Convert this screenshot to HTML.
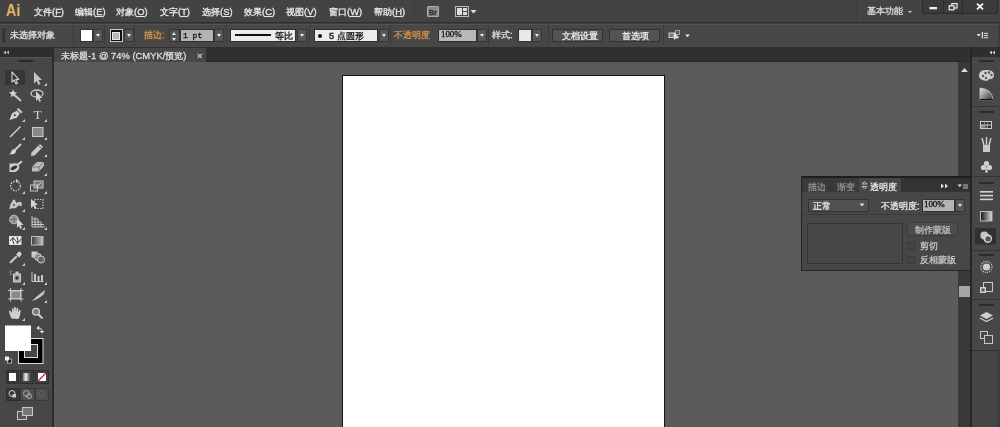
<!DOCTYPE html>
<html><head><meta charset="utf-8">
<style>
*{box-sizing:border-box;margin:0;padding:0}
html,body{width:1000px;height:427px;overflow:hidden;background:#5b5b5b;font-family:"Liberation Sans",sans-serif;font-size:9.4px;color:#e8e8e8}
.a{position:absolute}
.t{position:absolute;white-space:nowrap;line-height:1;will-change:transform;-webkit-text-stroke:0.3px currentColor}
/* menubar */
#menubar{left:0;top:0;width:1000px;height:23px;background:#434343;border-bottom:1px solid #2f2f2f}
#ctrl{left:0;top:23px;width:1000px;height:24px;background:#474747;border-top:1px solid #3d3d3d;box-shadow:inset 0 1px 0 #525252}
#hdrL{left:0;top:47px;width:53px;height:10px;background:#2e2e2e}
#tool{left:0;top:57px;width:52px;height:370px;background:#474747;border-top:1px solid #555}
#tabbar{left:53px;top:47px;width:919px;height:15px;background:#303030;border-bottom:1px solid #282828}
#tab{left:54px;top:48px;width:152px;height:14px;background:#474747}
#canvas{left:54px;top:62px;width:904px;height:365px;background:#5b5b5b}
#board{left:342px;top:75px;width:323px;height:360px;background:#fff;border:1px solid #151515}
#vscroll{left:958px;top:62px;width:12px;height:365px;background:#393939}
#gap{left:970px;top:47px;width:2px;height:380px;background:#262626}
#hdrR{left:972px;top:47px;width:28px;height:10px;background:#2e2e2e}
#dock{left:972px;top:57px;width:28px;height:370px;background:#474747}
.dd{position:absolute;background:#565656;border:1px solid #363636}
.dd:after{content:"";position:absolute;left:50%;top:50%;margin-left:-2.5px;margin-top:-1.5px;border-left:2.5px solid transparent;border-right:2.5px solid transparent;border-top:3px solid #ececec}
.orange{color:#d39450}
</style></head><body>
<div id="menubar" class="a"></div>
<div id="ctrl" class="a"></div>
<div id="hdrL" class="a"></div>
<div id="tool" class="a"></div>
<div id="tabbar" class="a"></div>
<div id="tab" class="a"></div>
<div id="canvas" class="a"></div>
<div id="board" class="a"></div>
<div class="a" style="left:52px;top:47px;width:2px;height:380px;background:#2b2b2b"></div>
<div id="vscroll" class="a"></div>
<div id="gap" class="a"></div>
<div id="hdrR" class="a"></div>
<div id="dock" class="a"></div>

<!-- menubar text -->
<div class="t" style="left:5.8px;top:2px;font-size:16.5px;font-weight:bold;color:#e8c070;transform:scaleX(0.86);transform-origin:0 0;-webkit-text-stroke:0.3px #b08030">Ai</div>
<div class="t" style="left:34px;top:6.8px">文件(<u>F</u>)</div>
<div class="t" style="left:75px;top:6.8px">编辑(<u>E</u>)</div>
<div class="t" style="left:116px;top:6.8px">对象(<u>O</u>)</div>
<div class="t" style="left:160px;top:6.8px">文字(<u>T</u>)</div>
<div class="t" style="left:202px;top:6.8px">选择(<u>S</u>)</div>
<div class="t" style="left:244px;top:6.8px">效果(<u>C</u>)</div>
<div class="t" style="left:286px;top:6.8px">视图(<u>V</u>)</div>
<div class="t" style="left:329px;top:6.8px">窗口(<u>W</u>)</div>
<div class="t" style="left:374px;top:6.8px">帮助(<u>H</u>)</div>
<div class="t" style="left:867px;top:5.8px;color:#dcdcdc">基本功能</div>


<!-- control bar -->
<div class="a" style="left:73px;top:25px;width:1px;height:20px;background:#3a3a3a"></div><div class="a" style="left:104px;top:25px;width:1px;height:20px;background:#3a3a3a"></div><div class="a" style="left:134px;top:25px;width:1px;height:20px;background:#3a3a3a"></div><div class="a" style="left:226px;top:25px;width:1px;height:20px;background:#3a3a3a"></div><div class="a" style="left:309px;top:25px;width:1px;height:20px;background:#3a3a3a"></div><div class="a" style="left:390px;top:25px;width:1px;height:20px;background:#3a3a3a"></div><div class="a" style="left:488px;top:25px;width:1px;height:20px;background:#3a3a3a"></div><div class="a" style="left:663px;top:25px;width:1px;height:20px;background:#3a3a3a"></div>
<div class="a" style="left:2px;top:28px;width:3px;height:15px;background:#333;border-left:1px solid #3a3a3a"></div>
<div class="t" style="left:10px;top:30px;color:#e0e0e0">未选择对象</div>
<div class="a" style="left:80px;top:29px;width:13px;height:13px;background:#fff;border:1px solid #333"></div>
<div class="dd" style="left:93px;top:29px;width:10px;height:13px"></div>
<div class="a" style="left:110px;top:29px;width:13px;height:13px;background:#111;border:1px solid #ccc"></div>
<div class="a" style="left:112px;top:32px;width:8px;height:8px;border:1px solid #e8e8e8;background:#b8b8b8"></div>
<div class="dd" style="left:124px;top:29px;width:10px;height:13px"></div>
<div class="t orange" style="left:144px;top:30px">描边:</div>
<div class="a" style="left:169px;top:29px;width:11px;height:13px;background:#525252;border:1px solid #333"></div>
<div class="a" style="left:171.5px;top:31.5px;width:0;height:0;border-left:2.5px solid transparent;border-right:2.5px solid transparent;border-bottom:3px solid #ddd"></div>
<div class="a" style="left:171.5px;top:37.5px;width:0;height:0;border-left:2.5px solid transparent;border-right:2.5px solid transparent;border-top:3px solid #ddd"></div>
<div class="a" style="left:180px;top:29px;width:34px;height:13px;background:#b4b4b4;border:1px solid #2e2e2e"></div>
<div class="t" style="left:183px;top:31.5px;color:#111;font-family:'Liberation Mono',monospace;font-size:8px">1 pt</div>
<div class="dd" style="left:214px;top:29px;width:10px;height:13px"></div>
<div class="a" style="left:230px;top:29px;width:66px;height:13px;background:#ececec;border:1px solid #2e2e2e"></div>
<div class="a" style="left:235px;top:34px;width:36px;height:2px;background:#111"></div>
<div class="t" style="left:275px;top:31px;color:#111">等比</div>
<div class="dd" style="left:297px;top:29px;width:10px;height:13px"></div>
<div class="a" style="left:314px;top:29px;width:64px;height:13px;background:#ececec;border:1px solid #2e2e2e"></div>
<div class="a" style="left:318px;top:34px;width:4px;height:4px;border-radius:50%;background:#111"></div>
<div class="t" style="left:329px;top:31px;color:#111">5 点圆形</div>
<div class="dd" style="left:379px;top:29px;width:10px;height:13px"></div>
<div class="t orange" style="left:394px;top:30px">不透明度</div>
<div class="a" style="left:438px;top:29px;width:39px;height:13px;background:#b9b9b9;border:1px solid #2e2e2e"></div>
<div class="t" style="left:440.5px;top:30.3px;color:#111;font-family:'Liberation Serif',serif;font-size:9px;letter-spacing:-0.1px">100%</div>
<div class="dd" style="left:477px;top:29px;width:10px;height:13px"></div>
<div class="t" style="left:492px;top:30px;color:#e0e0e0">样式:</div>
<div class="a" style="left:518px;top:29px;width:14px;height:13px;background:#e8e8e8;border:1px solid #333"></div>
<div class="dd" style="left:532px;top:29px;width:10px;height:13px"></div>
<div class="a" style="left:548px;top:23px;width:1px;height:23px;background:#3a3a3a"></div>
<div class="a" style="left:552px;top:29px;width:51px;height:13px;background:#535353;border:1px solid #323232"></div>
<div class="t" style="left:562px;top:31px;color:#e8e8e8">文档设置</div>
<div class="a" style="left:609px;top:29px;width:51px;height:13px;background:#535353;border:1px solid #323232"></div>
<div class="t" style="left:622px;top:31px;color:#e8e8e8">首选项</div>
<svg class="a" style="left:975px;top:30px" width="16" height="10" viewBox="975 30 16 10">
<path d="M976.5 34 L980.8 34 L978.65 36.5Z" fill="#e0e0e0"/>
<rect x="981.7" y="32" width="1.3" height="6.5" fill="#d8d8d8"/>
<rect x="983.8" y="32.8" width="4.4" height="1.1" fill="#d8d8d8"/>
<rect x="983.8" y="35" width="4.4" height="1.1" fill="#d8d8d8"/>
<rect x="983.8" y="37.2" width="4.4" height="1.1" fill="#d8d8d8"/>
</svg>
<div class="a" style="left:998px;top:23px;width:2px;height:24px;background:#3c3c3c"></div>


<!-- toolbar -->
<svg class="a" style="left:0;top:0" width="56" height="427" viewBox="0 0 56 427">
<defs>
<linearGradient id="g1" x1="0" x2="1" y1="0" y2="0"><stop offset="0" stop-color="#777"/><stop offset="0.35" stop-color="#eee"/><stop offset="1" stop-color="#2a2a2a"/></linearGradient>
<linearGradient id="g2" x1="0" x2="1" y1="0" y2="0"><stop offset="0" stop-color="#3a3a3a"/><stop offset="1" stop-color="#c4c4c4"/></linearGradient>
</defs>
<!-- header chevrons -->
<path d="M6 50.5 L3.5 52.5 L6 54.5Z M9 50.5 L6.5 52.5 L9 54.5Z" fill="#bbb"/>
<rect x="19" y="60" width="14" height="2" fill="#2a2a2a"/>
<!-- separators -->
<g fill="#444">
<rect x="3" y="104" width="46" height="1"/><rect x="3" y="177" width="46" height="1"/>
<rect x="3" y="231" width="46" height="1"/><rect x="3" y="286" width="46" height="1"/>
<rect x="3" y="322" width="46" height="1"/><rect x="3" y="367" width="46" height="1"/>
<rect x="3" y="403" width="46" height="1"/>
</g>
<!-- corner triangles -->
<g fill="#ccc">
<path d="M47 83 L47 86 L44 86Z"/>
<path d="M25 119 L25 122 L22 122Z"/><path d="M47 119 L47 122 L44 122Z"/>
<path d="M25 137 L25 140 L22 140Z"/><path d="M47 137 L47 140 L44 140Z"/>
<path d="M47 154 L47 157 L44 157Z"/><path d="M47 173 L47 176 L44 176Z"/>
<path d="M25 191 L25 194 L22 194Z"/><path d="M47 191 L47 194 L44 194Z"/>
<path d="M25 209 L25 212 L22 212Z"/>
<path d="M25 227 L25 230 L22 230Z"/><path d="M47 227 L47 230 L44 230Z"/>
<path d="M25 263 L25 266 L22 266Z"/>
<path d="M25 282 L25 285 L22 285Z"/><path d="M47 282 L47 285 L44 285Z"/>
<path d="M47 300 L47 303 L44 303Z"/>
<path d="M25 318 L25 321 L22 321Z"/>
</g>
<!-- selection selected -->
<rect x="5" y="70" width="20" height="15" fill="#363636"/>
<path d="M12 71.8 L12 82.2 L14.2 80 L16 84 L17.6 83.3 L15.8 79.4 L18.8 79.4Z" fill="#333" stroke="#d4d4d4" stroke-width="1.1" stroke-linejoin="round"/>
<path d="M34 72 L34 83.5 L36.5 81 L38.5 85 L40.5 84 L38.5 80 L42 80Z" fill="#c4c4c4"/>
<!-- magic wand -->
<path d="M13 89 L14 92 L17 92.5 L14.5 94.5 L15.5 97.5 L13 95.5 L10.5 97.5 L11.5 94.5 L9 92.5 L12 92Z" fill="#d6d6d6"/>
<path d="M14.5 95 L21 101" stroke="#c8c8c8" stroke-width="2"/>
<!-- lasso -->
<ellipse cx="37" cy="93.5" rx="6" ry="3.5" fill="none" stroke="#c8c8c8" stroke-width="1.3"/>
<path d="M36 91 L36 101 L38 99 L39.5 102 L41 101 L39.5 98 L42.5 98Z" fill="#d0d0d0"/>
<!-- pen -->
<path d="M17.5 108.8 L21.8 112.8" stroke="#d0d0d0" stroke-width="2.2"/>
<path d="M17 110.8 L19.8 113.6 L16.8 117.8 L9.5 120 L12 113.2 Z" fill="#d2d2d2"/>
<circle cx="14.8" cy="115.3" r="1" fill="#3a3a3a"/>
<!-- type -->
<text x="37.5" y="119" font-family="Liberation Serif" font-size="13.5" fill="#d0d0d0" text-anchor="middle">T</text>
<!-- line -->
<path d="M10 137 L20.5 126.5" stroke="#d0d0d0" stroke-width="1.5"/>
<!-- rect -->
<rect x="32.5" y="127.5" width="10.5" height="9" fill="#8a8a8a" stroke="#c8c8c8" stroke-width="1"/>
<!-- brush -->
<path d="M21 144 L15 150" stroke="#d0d0d0" stroke-width="1.8"/>
<path d="M15.5 149 Q17 152 14 154 L9 154.5 Q11 153 11.5 151 Q12.5 148.5 15.5 149Z" fill="#d6d6d6"/>
<!-- pencil -->
<path d="M40 144 L43 147 L34.5 155.5 L31 156 L31.5 152.5Z" fill="#c8c8c8"/>
<path d="M38.5 145.5 L41.5 148.5" stroke="#444" stroke-width="0.8"/>
<!-- blob brush -->
<path d="M9.5 163.5 L14 163.5 Q16.5 162.8 18.5 164.5 L19.5 167.5 Q18.5 171 15.5 172 L9.5 172 Z" fill="#cdcdcd"/>
<ellipse cx="14" cy="167.8" rx="3.6" ry="1.7" transform="rotate(-28 14 167.8)" fill="#333"/>
<path d="M17 165.2 L22 161.2" stroke="#d6d6d6" stroke-width="1.8"/>
<!-- eraser -->
<path d="M32 167 L37 162 L44 162 L44 166 L39 171.5 L32 171.5Z" fill="#bdbdbd"/>
<path d="M32 167 L39 167 L44 162 M39 167 L39 171.5" stroke="#666" stroke-width="0.8" fill="none"/>
<!-- rotate -->
<circle cx="15.5" cy="186" r="4.8" fill="none" stroke="#c8c8c8" stroke-width="1.3" stroke-dasharray="1.6 1.2"/>
<path d="M16 179 L19 181 L16 183Z" fill="#d0d0d0"/>
<!-- scale -->
<rect x="34" y="181" width="9" height="7" fill="#777" stroke="#c8c8c8" stroke-width="1"/>
<rect x="30.5" y="185" width="7" height="6" fill="none" stroke="#c8c8c8" stroke-width="1"/>
<path d="M36 187 L41 183" stroke="#ddd" stroke-width="1"/>
<!-- warp -->
<path d="M9.5 209.5 Q9.5 204 12 202 Q13 198.5 15 200 Q15.5 202 17 203 Q19 201 21.5 202.5 Q22.5 205 21 206.5 Q19.5 205 18 206 Q15.5 209.5 12.5 208 Q11 208.5 9.5 209.5Z" fill="#c8c8c8"/>
<circle cx="14" cy="205" r="1.1" fill="#555"/>
<!-- free transform -->
<rect x="34.5" y="199.5" width="8.5" height="9" fill="none" stroke="#c8c8c8" stroke-width="1.2" stroke-dasharray="1.5 1.2"/>
<path d="M31 199 L31 208 L33.5 206 L35 209 L36.5 208 L35 205 L38 205Z" fill="#d6d6d6"/>
<!-- shape builder -->
<circle cx="14" cy="219.5" r="4.3" fill="#9a9a9a" stroke="#c8c8c8" stroke-width="1"/>
<path d="M10 219.5 L18 219.5 M14 215.5 L14 223.5" stroke="#666" stroke-width="0.8"/>
<path d="M17 218 L17 228 L19 226 L20.5 229 L22 228 L20.5 225 L23.5 225Z" fill="#d6d6d6"/>
<!-- perspective grid -->
<path d="M32 216 L32 227 L45 227 M35 217 L35 227 M38 219 L38 227 M41 222 L41 227 M32 219 L38 219 M32 222 L41 222 M32 224.5 L44 224.5" fill="none" stroke="#c8c8c8" stroke-width="1"/>
<!-- mesh -->
<rect x="9.5" y="236.5" width="11.5" height="8" fill="#eee" stroke="#ddd"/>
<path d="M10 241 Q13 236 15.5 240.5 Q18 245 21 239 M13 237 Q12 241 14 244 M17 237 Q19 241 17 244" fill="none" stroke="#333" stroke-width="1"/>
<!-- gradient -->
<rect x="31.5" y="236.5" width="11.5" height="8.5" fill="url(#g2)" stroke="#bbb" stroke-width="1"/>
<!-- eyedropper -->
<path d="M20.5 252 Q22.5 254 20.5 256 L19 257.5 L16 254.5 L17.5 253 Q18.5 250.5 20.5 252Z" fill="#d0d0d0"/>
<path d="M16.5 256 L11 261.5 L10 263 L11.5 262 L17 256.5" fill="none" stroke="#c8c8c8" stroke-width="1.4"/>
<!-- blend -->
<rect x="31.5" y="251.5" width="6" height="6" fill="#ccc"/>
<circle cx="38" cy="257" r="3.5" fill="#888" stroke="#ccc" stroke-width="1"/>
<circle cx="41" cy="259.5" r="3.5" fill="#666" stroke="#ccc" stroke-width="1"/>
<!-- symbol sprayer -->
<rect x="13.5" y="274" width="7" height="8" fill="#aaa" stroke="#ccc" stroke-width="1"/>
<circle cx="17" cy="278" r="1.8" fill="#333"/>
<rect x="15.5" y="271.5" width="3" height="2.5" fill="#ccc"/>
<path d="M9.5 272 L11 272 M10 274 L11.5 274.5 M11 270.5 L12 271.5" stroke="#bbb" stroke-width="1"/>
<!-- graph -->
<path d="M32 272 L32 281.5 L43.5 281.5" fill="none" stroke="#c8c8c8" stroke-width="1"/>
<rect x="34" y="274" width="2" height="7" fill="#c8c8c8"/>
<rect x="37.5" y="276" width="2" height="5" fill="#c8c8c8"/>
<rect x="41" y="275" width="2" height="6" fill="#c8c8c8"/>
<!-- artboard -->
<rect x="11" y="291" width="9.5" height="7.5" fill="#8a8a8a" stroke="#c8c8c8" stroke-width="1"/>
<path d="M8 290.5 L23.5 290.5 M8 299 L23.5 299 M10.5 288 L10.5 301.5 M21 288 L21 301.5" stroke="#c8c8c8" stroke-width="1"/>
<!-- slice -->
<path d="M45 290 L36 297 L32 301 Q38 299.5 44 294 Z" fill="#c8c8c8"/>
<!-- hand -->
<path d="M11.5 318.5 Q9 313 9 311 Q9.5 310 10.5 311 L12 313 L12 308.5 Q12.8 307.5 13.5 308.5 L13.8 312 L14.2 307.3 Q15 306.5 15.8 307.3 L16 312 L16.6 308 Q17.4 307.3 18.2 308 L18.2 312.5 L19.2 310 Q20 309.5 20.7 310.2 L20 315.5 L18.5 319Z" fill="#d0d0d0"/>
<!-- zoom -->
<circle cx="36" cy="311.8" r="3.4" fill="#7a7a7a" stroke="#cfcfcf" stroke-width="1.3"/>
<path d="M38.5 314.5 L42.5 318.5" stroke="#d0d0d0" stroke-width="2"/>
<!-- fill / stroke -->
<rect x="18.5" y="338.5" width="24.5" height="25" fill="#000" stroke="#ddd" stroke-width="1"/>
<rect x="24.5" y="344.5" width="13" height="13" fill="#454545" stroke="#e0e0e0" stroke-width="1"/>
<rect x="5" y="325.5" width="26" height="25.5" fill="#fff"/>
<path d="M38.5 328 Q42 328 42 331.5" fill="none" stroke="#bbb" stroke-width="1.1"/>
<path d="M36.3 328 L39.2 325.8 L39.2 330.2Z M39.8 331 L44.2 331 L42 333.6Z" fill="#e0e0e0"/>
<rect x="7.5" y="359" width="4" height="4" fill="#111" stroke="#ccc" stroke-width="0.8"/>
<rect x="5" y="356.5" width="4" height="4" fill="#eee"/>
<!-- color buttons -->
<rect x="6.5" y="370.5" width="12" height="13" fill="#383838" stroke="#2e2e2e"/>
<rect x="9" y="373" width="7" height="8" fill="#fff"/>
<rect x="20.5" y="370.5" width="13" height="13" fill="#3f3f3f" stroke="#2e2e2e"/>
<rect x="23" y="373" width="8" height="8" fill="url(#g1)"/>
<rect x="35.5" y="370.5" width="13" height="13" fill="#3f3f3f" stroke="#2e2e2e"/>
<rect x="38" y="373" width="8" height="8" fill="#fff"/>
<path d="M38 381 L46 373" stroke="#cc2233" stroke-width="1.3"/>
<!-- draw modes -->
<rect x="6.5" y="388.5" width="13" height="12" fill="#383838" stroke="#2e2e2e"/>
<rect x="20.5" y="388.5" width="14" height="12" fill="#4e4e4e" stroke="#3a3a3a"/>
<rect x="35.5" y="388.5" width="13" height="12" fill="#4e4e4e" stroke="#3a3a3a"/>
<circle cx="12" cy="393.5" r="3" fill="none" stroke="#ccc" stroke-width="1"/><rect x="12.5" y="394" width="3.5" height="3.5" fill="#ccc"/>
<circle cx="26.5" cy="393.5" r="3" fill="none" stroke="#aaa" stroke-width="1"/><circle cx="29" cy="396" r="2.5" fill="none" stroke="#aaa" stroke-width="1"/>
<circle cx="41.5" cy="394" r="3" fill="none" stroke="#666" stroke-width="1"/>
<!-- screen mode -->
<rect x="17.5" y="411.5" width="9" height="8" fill="#555" stroke="#c8c8c8"/>
<rect x="22.5" y="407.5" width="10" height="8" fill="#777" stroke="#c8c8c8"/>
</svg>


<!-- right dock -->
<svg class="a" style="left:940px;top:44px" width="60" height="383" viewBox="940 44 60 383">
<defs>
<linearGradient id="g3" x1="0" x2="1" y1="0" y2="0"><stop offset="0" stop-color="#111"/><stop offset="1" stop-color="#ddd"/></linearGradient>
<linearGradient id="g4" x1="0" x2="1" y1="0" y2="1"><stop offset="0" stop-color="#e8e8e8"/><stop offset="1" stop-color="#2e2e2e"/></linearGradient>
</defs>
<path d="M992 50.5 L989.5 52.5 L992 54.5Z M995 50.5 L992.5 52.5 L995 54.5Z" fill="#ccc"/>
<!-- scroll up arrow -->
<path d="M961 72 L964.5 68 L968 72Z" fill="#ddd"/>
<!-- scroll thumb -->
<rect x="959" y="286" width="11" height="11" fill="#a6a6a6"/>
<!-- group borders -->
<g fill="#353535">
<rect x="972" y="106" width="28" height="1"/><rect x="972" y="176" width="28" height="1"/>
<rect x="972" y="250" width="28" height="1"/><rect x="972" y="299" width="28" height="1"/>
<rect x="972" y="350" width="28" height="1"/>
</g>
<g fill="#2c2c2c">
<rect x="979" y="60" width="15" height="2"/><rect x="979" y="111" width="15" height="2"/>
<rect x="979" y="182" width="15" height="2"/><rect x="979" y="254" width="15" height="2"/>
<rect x="979" y="304" width="15" height="2"/>
</g>
<!-- color palette -->
<path d="M986 70 Q994 70 994 75 Q994 79 990 79 Q988 79 988 80.5 Q987 81 984 80.5 Q979 79.5 979 75.5 Q979 70 986 70Z" fill="#cfcfcf"/>
<circle cx="983" cy="76" r="1.2" fill="#555"/><circle cx="985.5" cy="73" r="1.2" fill="#555"/><circle cx="989" cy="72.5" r="1.2" fill="#555"/><circle cx="991.5" cy="75" r="1.2" fill="#555"/><circle cx="986" cy="78" r="1.2" fill="#555"/>
<!-- color guide -->
<path d="M980 88 L980 100 L993 100 Q992 89 980 88Z" fill="url(#g4)" stroke="#c8c8c8" stroke-width="0.8"/>
<rect x="980" y="99" width="13" height="1.3" fill="#111"/>
<!-- swatches -->
<rect x="980" y="121" width="12" height="8" fill="#ccc"/>
<g fill="#333"><rect x="981" y="122" width="3" height="2.5"/><rect x="984.5" y="122" width="3" height="2.5"/><rect x="988" y="122" width="3" height="2.5"/>
<rect x="981" y="125.5" width="3" height="2.5" fill="#888"/><rect x="984.5" y="125.5" width="3" height="2.5" fill="#555"/><rect x="988" y="125.5" width="3" height="2.5"/></g>
<!-- brushes -->
<rect x="983" y="145" width="7" height="7" fill="#c8c8c8"/>
<path d="M984 145 L982 138 M986.5 145 L986.5 137 M989 145 L991 138" stroke="#d0d0d0" stroke-width="1.4"/>
<!-- symbols (club) -->
<circle cx="986.5" cy="163.5" r="2.6" fill="#cfcfcf"/><circle cx="983.5" cy="167.5" r="2.6" fill="#cfcfcf"/><circle cx="989.5" cy="167.5" r="2.6" fill="#cfcfcf"/>
<path d="M986.5 166 L985 172.5 L988 172.5Z" fill="#cfcfcf"/>
<!-- stroke -->
<rect x="980" y="191" width="13" height="1.6" fill="#d0d0d0"/><rect x="980" y="194.8" width="13" height="1.6" fill="#d0d0d0"/><rect x="980" y="198.6" width="13" height="1.6" fill="#d0d0d0"/>
<!-- gradient -->
<rect x="980.5" y="211.5" width="11.5" height="9.5" fill="url(#g3)" stroke="#bbb" stroke-width="1"/>
<!-- transparency selected -->
<rect x="975" y="228" width="21" height="16.5" fill="#303030"/>
<circle cx="984.3" cy="235.6" r="4" fill="#c4c4c4"/>
<circle cx="987.8" cy="238.6" r="4.3" fill="#d2d2d2"/>
<circle cx="988.1" cy="238.9" r="2.7" fill="#555"/>
<!-- appearance -->
<circle cx="986.5" cy="267" r="5.5" fill="none" stroke="#c8c8c8" stroke-width="1.2" stroke-dasharray="1.2 1"/>
<circle cx="986.5" cy="267" r="3.6" fill="#cfcfcf"/>
<!-- graphic styles -->
<rect x="983.5" y="282.5" width="9" height="9" fill="none" stroke="#c8c8c8" stroke-width="1"/>
<rect x="980" y="287" width="6" height="6" fill="#cfcfcf"/>
<rect x="981.5" y="288.5" width="3" height="3" fill="#555"/>
<!-- layers -->
<path d="M986.5 312 L993 315.5 L986.5 319 L980 315.5Z" fill="#d0d0d0"/>
<path d="M980 318 L986.5 321.5 L993 318" fill="none" stroke="#d0d0d0" stroke-width="1.3"/>
<!-- artboards -->
<rect x="980.5" y="331.5" width="7" height="7" fill="none" stroke="#c8c8c8" stroke-width="1"/>
<rect x="984.5" y="335.5" width="8" height="8" fill="#474747" stroke="#c8c8c8" stroke-width="1"/>
</svg>
<div class="a" style="left:972px;top:350px;width:28px;height:77px;background:#454545;border-top:1px solid #2e2e2e;border-right:2px solid #3c3c3c"></div>


<!-- window buttons -->
<div class="a" style="left:922px;top:0;width:76px;height:14px;background:#3b3b3b;border:1px solid #2a2a2a;border-top:none;border-radius:0 0 3px 3px"></div>
<div class="a" style="left:943px;top:0;width:1px;height:13px;background:#2a2a2a"></div>
<div class="a" style="left:962px;top:0;width:1px;height:13px;background:#2a2a2a"></div>
<svg class="a" style="left:920px;top:0" width="80" height="16" viewBox="920 0 80 16">
<rect x="929.5" y="7" width="7.5" height="2.3" fill="#f0f0f0"/>
<rect x="951.8" y="3.6" width="5.2" height="4.4" fill="none" stroke="#eee" stroke-width="1.2"/>
<rect x="949.2" y="5.8" width="4.8" height="4" fill="#3b3b3b" stroke="#f4f4f4" stroke-width="1.2"/>
<path d="M977 3.6 L983 9.4 M983 3.6 L977 9.4" stroke="#f4f4f4" stroke-width="1.9"/>
</svg>
<div class="a" style="left:857px;top:0;width:1px;height:22px;background:#383838"></div>
<div class="a" style="left:858px;top:0;width:1px;height:22px;background:#4a4a4a"></div>
<div class="a" style="left:414px;top:0;width:1px;height:22px;background:#3c3c3c"></div>
<div class="a" style="left:449px;top:0;width:1px;height:22px;background:#3f3f3f"></div>
<svg class="a" style="left:906px;top:8px" width="8" height="6"><path d="M2 3 L6 3 L4 5Z" fill="#ccc"/></svg>
<!-- Br icon -->
<div class="a" style="left:427px;top:6px;width:12px;height:11px;background:#8a8a8a;border:1px solid #aaa;border-radius:1px"></div>
<div class="t" style="left:429px;top:9px;font-size:7px;color:#333;font-weight:bold">Br</div>
<!-- arrange icon -->
<div class="a" style="left:455px;top:6px;width:14px;height:11px;border:1px solid #bbb;background:#444"></div>
<div class="a" style="left:457px;top:8px;width:5px;height:7px;background:#ddd"></div>
<div class="a" style="left:463px;top:8px;width:4px;height:3px;background:#ddd"></div>
<div class="a" style="left:463px;top:12px;width:4px;height:3px;background:#ddd"></div>
<svg class="a" style="left:470px;top:9px" width="8" height="6"><path d="M0.5 1 L6.5 1 L3.5 4.5Z" fill="#ddd"/></svg>
<!-- control bar extra icon -->
<svg class="a" style="left:665px;top:28px" width="30" height="16" viewBox="665 28 30 16">
<rect x="669" y="33" width="5" height="4.5" fill="#777" stroke="#d0d0d0" stroke-width="1"/>
<rect x="675.5" y="30.5" width="4" height="4" fill="#555" stroke="#aaa" stroke-width="0.9"/>
<path d="M674 32 L674 40 L676 38.5 L679.5 38 Z" fill="#d8d8d8"/>
<path d="M685 34.5 L690 34.5 L687.5 37.3Z" fill="#e4e4e4"/>
</svg>

<!-- transparency panel -->
<div class="a" style="left:801px;top:176px;width:170px;height:95px;background:#474747;border:1px solid #262626;border-top:2px solid #1e1e1e"></div>
<div class="a" style="left:802px;top:178px;width:168px;height:14px;background:#333"></div>
<div class="a" style="left:803px;top:178px;width:27px;height:14px;background:#3a3a3a"></div>
<div class="a" style="left:831px;top:178px;width:28px;height:14px;background:#3a3a3a"></div>
<div class="a" style="left:859px;top:178px;width:42px;height:14px;background:#474747"></div>
<div class="t" style="left:808px;top:181.8px;color:#8e8e8e">描边</div>
<div class="t" style="left:837px;top:181.8px;color:#8e8e8e">渐变</div>
<div class="t" style="left:870px;top:181.8px;color:#e4e4e4">透明度</div>
<svg class="a" style="left:800px;top:176px" width="172" height="96" viewBox="800 176 172 96">
<path d="M862 184 L864.5 181.5 L867 184Z M862 186.5 L864.5 189 L867 186.5Z" fill="none" stroke="#ccc" stroke-width="0.9"/>
<path d="M941 183.5 L944 186 L941 188.5Z M945 183.5 L948 186 L945 188.5Z" fill="#ddd"/>
<rect x="953" y="181" width="1" height="10" fill="#2a2a2a"/>
<path d="M957.5 184.5 L962 184.5 L959.75 187Z" fill="#ddd"/>
<rect x="963" y="184" width="5" height="5" fill="#777"/>
<rect x="802" y="214" width="168" height="1" fill="#3a3a3a"/>
</svg>
<div class="a" style="left:808px;top:199px;width:61px;height:13px;background:#505050;border:1px solid #333"></div>
<div class="t" style="left:813px;top:201px;color:#e6e6e6">正常</div>
<svg class="a" style="left:859px;top:203px" width="7" height="5"><path d="M0.5 0.5 L5.5 0.5 L3 3.5Z" fill="#ddd"/></svg>
<div class="t" style="left:881px;top:201px;color:#e6e6e6">不透明度:</div>
<div class="a" style="left:922px;top:199px;width:33px;height:13px;background:#b4b4b4;border:1px solid #333"></div>
<div class="t" style="left:924px;top:200.3px;color:#111;font-family:'Liberation Serif',serif;font-size:9px;letter-spacing:-0.1px">100%</div>
<div class="dd" style="left:955px;top:199px;width:10px;height:13px"></div>
<div class="a" style="left:807px;top:223px;width:96px;height:41px;background:#474747;border:1px solid #333"></div>
<div class="a" style="left:907px;top:222px;width:51px;height:14px;background:#4c4c4c;border:1px solid #3c3c3c"></div>
<div class="t" style="left:915px;top:225px;color:#bcbcbc">制作蒙版</div>
<div class="a" style="left:907px;top:242px;width:8px;height:8px;background:#444;border:1px solid #3a3a3a"></div>
<div class="t" style="left:920px;top:241px;color:#c4c4c4">剪切</div>
<div class="a" style="left:907px;top:256px;width:8px;height:8px;background:#444;border:1px solid #3a3a3a"></div>
<div class="t" style="left:920px;top:255px;color:#c4c4c4">反相蒙版</div>

<!-- tab -->
<div class="t" style="left:61px;top:51px;color:#dedede">未标题-1 @ 74% (CMYK/预览)</div>
<div class="t" style="left:196.5px;top:51px;color:#cfcfcf">×</div>

</body></html>
